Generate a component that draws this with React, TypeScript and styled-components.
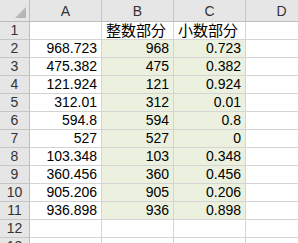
import React from "react";
import styled, { createGlobalStyle } from "styled-components";

const Global = createGlobalStyle`
  html, body { margin: 0; padding: 0; background: #ffffff; }
  body { overflow: hidden; }
`;

const Sheet = styled.div`
  width: 298px;
  height: 243px;
  overflow: hidden;
  display: grid;
  grid-template-columns: 30px 72px 72px 72px 72px;
  grid-template-rows: 22px repeat(13, 18px);
  font-family: "Liberation Sans", "Noto Sans CJK JP", sans-serif;
  font-size: 14px;
  color: #000;
`;

const Corner = styled.div`
  position: relative;
  background: #e6e6e6;
  border-right: 1px solid #bdbdbd;
  border-bottom: 1px solid #bdbdbd;
  box-sizing: border-box;
`;

const CornerTriangle = styled.div`
  position: absolute;
  right: 3px;
  bottom: 3px;
  width: 0;
  height: 0;
  border-left: 11px solid transparent;
  border-bottom: 11px solid #b7b7b7;
`;

const ColHead = styled.div`
  background: #e6e6e6;
  border-right: 1px solid #c6c6c6;
  border-bottom: 1px solid #bdbdbd;
  box-sizing: border-box;
  display: flex;
  align-items: flex-end;
  justify-content: center;
  padding-bottom: 2px;
  color: #333;
  font-size: 14px;
`;

const RowHead = styled.div`
  background: #e6e6e6;
  border-right: 1px solid #bdbdbd;
  border-bottom: 1px solid #c6c6c6;
  box-sizing: border-box;
  display: flex;
  align-items: flex-end;
  justify-content: center;
  color: #333;
  font-size: 14px;
  line-height: 17px;
`;

const Cell = styled.div<{ $fill?: boolean; $align?: "left" | "right" }>`
  background: ${(p) => (p.$fill ? "#ebf1de" : "#ffffff")};
  border-right: 1px solid #d4d4d4;
  border-bottom: 1px solid #d4d4d4;
  box-sizing: border-box;
  display: flex;
  align-items: flex-end;
  justify-content: ${(p) => (p.$align === "left" ? "flex-start" : "flex-end")};
  padding: 0 4px 0 4px;
  line-height: 17px;
  white-space: nowrap;
`;

const CjkText = styled.span`
  display: inline-block;
  font-family: "Noto Sans CJK JP", sans-serif;
  font-size: 15px;
  line-height: 16px;
  padding-bottom: 1px;
`;

const rows: [string, string, string][] = [
  ["968.723", "968", "0.723"],
  ["475.382", "475", "0.382"],
  ["121.924", "121", "0.924"],
  ["312.01", "312", "0.01"],
  ["594.8", "594", "0.8"],
  ["527", "527", "0"],
  ["103.348", "103", "0.348"],
  ["360.456", "360", "0.456"],
  ["905.206", "905", "0.206"],
  ["936.898", "936", "0.898"],
];

export default function App() {
  return (
    <>
      <Global />
      <Sheet>
        <Corner>
          <CornerTriangle />
        </Corner>
        {["A", "B", "C", "D"].map((c) => (
          <ColHead key={c}>{c}</ColHead>
        ))}

        <RowHead>1</RowHead>
        <Cell />
        <Cell $align="left">
          <CjkText>整数部分</CjkText>
        </Cell>
        <Cell $align="left">
          <CjkText>小数部分</CjkText>
        </Cell>
        <Cell />

        {rows.map((r, i) => (
          <React.Fragment key={i}>
            <RowHead>{i + 2}</RowHead>
            <Cell>{r[0]}</Cell>
            <Cell $fill>{r[1]}</Cell>
            <Cell $fill>{r[2]}</Cell>
            <Cell />
          </React.Fragment>
        ))}

        {[12, 13].map((n) => (
          <React.Fragment key={n}>
            <RowHead>{n}</RowHead>
            <Cell />
            <Cell />
            <Cell />
            <Cell />
          </React.Fragment>
        ))}
      </Sheet>
    </>
  );
}
